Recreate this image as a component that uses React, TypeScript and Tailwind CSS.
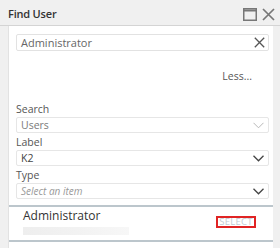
import React from 'react';

const Chevron = ({ light }: { light?: boolean }) => (
  <svg width="11" height="7" viewBox="0 0 11 7" className="shrink-0">
    <path
      d="M0.5 0.8 L5.5 5.8 L10.5 0.8"
      fill="none"
      stroke={light ? '#b8b8b8' : '#444'}
      strokeWidth={light ? 1 : 1.3}
    />
  </svg>
);

const Field = ({ label, value, placeholder, light }: { label: string; value?: string; placeholder?: string; light?: boolean }) => (
  <div className="flex flex-col">
    <div className="h-[17px] flex items-center text-[10.5px] text-[#555] leading-none pt-[1px]">{label}</div>
    <div className="h-[16px] border border-[#e6e6e6] rounded-[2px] bg-white flex items-center justify-between pl-[4px] pr-[4px]">
      {value ? (
        <span className={`text-[10.5px] leading-none ${light ? 'text-[#7a7a7a]' : 'text-[#444]'}`}>{value}</span>
      ) : (
        <span className="text-[10px] leading-none italic text-[#999]">{placeholder}</span>
      )}
      <Chevron light={light} />
    </div>
  </div>
);

export default function App() {
  return (
    <div className="w-[280px] h-[248px] bg-[#f0f0f0] overflow-hidden flex flex-col" style={{ fontFamily: '"Open Sans", sans-serif' }}>
      {/* Header */}
      <div className="h-[26px] shrink-0 flex items-center justify-between pl-[8px] pr-[5px] border-b border-[#d4d4d4] pt-[4px]">
        <span className="text-[11px] font-semibold text-[#333] tracking-[-0.2px]">Find User</span>
        <div className="flex items-center gap-[5px]">
          <svg width="14" height="13" viewBox="0 0 14 13">
            <rect x="0.75" y="0.75" width="12.5" height="11.5" fill="none" stroke="#777" strokeWidth="1.5" />
            <line x1="0.75" y1="2.5" x2="13.25" y2="2.5" stroke="#777" strokeWidth="2" />
          </svg>
          <svg width="13" height="13" viewBox="0 0 13 13">
            <path d="M1 1 L12 12 M12 1 L1 12" stroke="#777" strokeWidth="1.7" />
          </svg>
        </div>
      </div>

      {/* Panel */}
      <div className="flex-1 ml-[8px] mr-[7px] bg-white border-l border-[#e2e2e2] flex flex-col">
        <div className="px-[7px] pr-[4px] pt-[8px] flex flex-col">
          <div className="h-[17px] border border-[#e2e2e2] rounded-[2px] flex items-center justify-between pl-[4px] pr-[3px]">
            <span className="text-[11px] text-[#666] leading-none">Administrator</span>
            <svg width="11" height="11" viewBox="0 0 11 11">
              <path d="M0.8 0.8 L10.2 10.2 M10.2 0.8 L0.8 10.2" stroke="#555" strokeWidth="1.3" />
            </svg>
          </div>
          <div className="h-[49px] flex items-center justify-end pr-[17px] pt-[2px]">
            <span className="text-[10.5px] text-[#555] leading-none">Less...</span>
          </div>
          <Field label="Search" value="Users" light />
          <Field label="Label" value="K2" />
          <Field label="Type" placeholder="Select an item" />
        </div>

        <div className="mt-[6px] h-[2px] bg-[#bcc6cc]" />
        <div className="h-[33px] flex items-start justify-between pl-[14px] pr-[17px] pt-[3px]">
          <div className="flex flex-col gap-[5px]">
            <span className="text-[12px] text-[#333] leading-none">Administrator</span>
            <div className="w-[106px] h-[8px] bg-gradient-to-r from-[#eeeeee] via-[#f2f2f2] to-[#f7f7f7]" />
          </div>
          <div className="h-[12px] w-[40px] border-2 border-[#e02424] flex items-center justify-center mt-[6px]">
            <span className="text-[9.5px] text-[#c3cbd3] leading-none tracking-[0.3px]">SELECT</span>
          </div>
        </div>
        <div className="h-[2px] bg-[#bcc6cc]" />
      </div>
    </div>
  );
}
